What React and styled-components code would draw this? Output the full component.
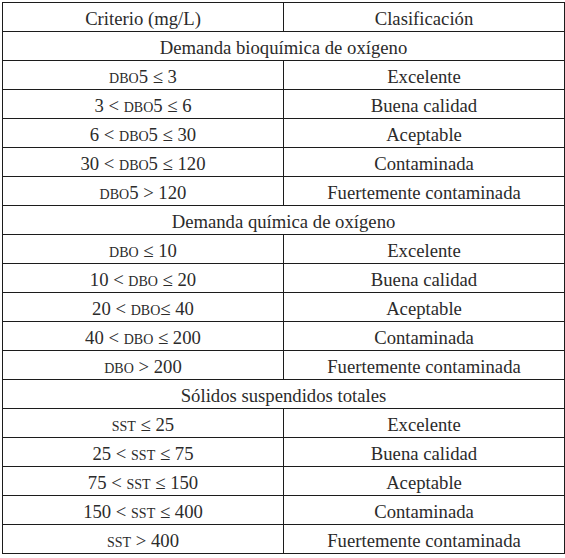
import React from "react";
import styled, { createGlobalStyle } from "styled-components";

const Global = createGlobalStyle`
  html, body { margin: 0; padding: 0; background: #ffffff; }
  body { font-family: "Liberation Serif", "DejaVu Serif", serif; }
`;

const Page = styled.div`
  padding: 2px 0 0 2px;
`;

const Table = styled.table`
  border-collapse: collapse;
  width: 563px;
  table-layout: fixed;
  font-family: "Liberation Serif", "DejaVu Serif", serif;
  font-size: 18.7px;
  color: #2b2b2b;
`;

const Row = styled.tr`
  height: 29px;
`;

const Cell = styled.td`
  border: 1px solid #1c1c1c;
  padding: 3px 0 0 0;
  text-align: center;
  vertical-align: middle;
  line-height: 24px;
  white-space: nowrap;
  width: 50%;
`;

const SmallCaps = styled.span`
  font-variant: small-caps;
  font-size: 1.05em;
`;

const sections = [
  {
    title: "Demanda bioquímica de oxígeno",
    rows: [
      [[null, "dbo", "5 ≤ 3"], "Excelente"],
      [["3 < ", "dbo", "5 ≤ 6"], "Buena calidad"],
      [["6 < ", "dbo", "5 ≤ 30"], "Aceptable"],
      [["30 < ", "dbo", "5 ≤ 120"], "Contaminada"],
      [[null, "dbo", "5 > 120"], "Fuertemente contaminada"],
    ],
  },
  {
    title: "Demanda química de oxígeno",
    rows: [
      [[null, "dbo", " ≤ 10"], "Excelente"],
      [["10 < ", "dbo", " ≤ 20"], "Buena calidad"],
      [["20 < ", "dbo", "≤ 40"], "Aceptable"],
      [["40 < ", "dbo", " ≤ 200"], "Contaminada"],
      [[null, "dbo", " > 200"], "Fuertemente contaminada"],
    ],
  },
  {
    title: "Sólidos suspendidos totales",
    rows: [
      [[null, "sst", " ≤ 25"], "Excelente"],
      [["25 < ", "sst", " ≤ 75"], "Buena calidad"],
      [["75 < ", "sst", " ≤ 150"], "Aceptable"],
      [["150 < ", "sst", " ≤ 400"], "Contaminada"],
      [[null, "sst", " > 400"], "Fuertemente contaminada"],
    ],
  },
];

export default function App() {
  return (
    <Page>
      <Global />
      <Table>
        <tbody>
          <Row>
            <Cell>Criterio (mg/L)</Cell>
            <Cell>Clasificación</Cell>
          </Row>
          {sections.map((s) => (
            <React.Fragment key={s.title}>
              <Row>
                <Cell colSpan={2}>{s.title}</Cell>
              </Row>
              {s.rows.map(([crit, cls], i) => (
                <Row key={i}>
                  <Cell>
                    {crit[0]}
                    <SmallCaps>{crit[1]}</SmallCaps>
                    {crit[2]}
                  </Cell>
                  <Cell>{cls}</Cell>
                </Row>
              ))}
            </React.Fragment>
          ))}
        </tbody>
      </Table>
    </Page>
  );
}
